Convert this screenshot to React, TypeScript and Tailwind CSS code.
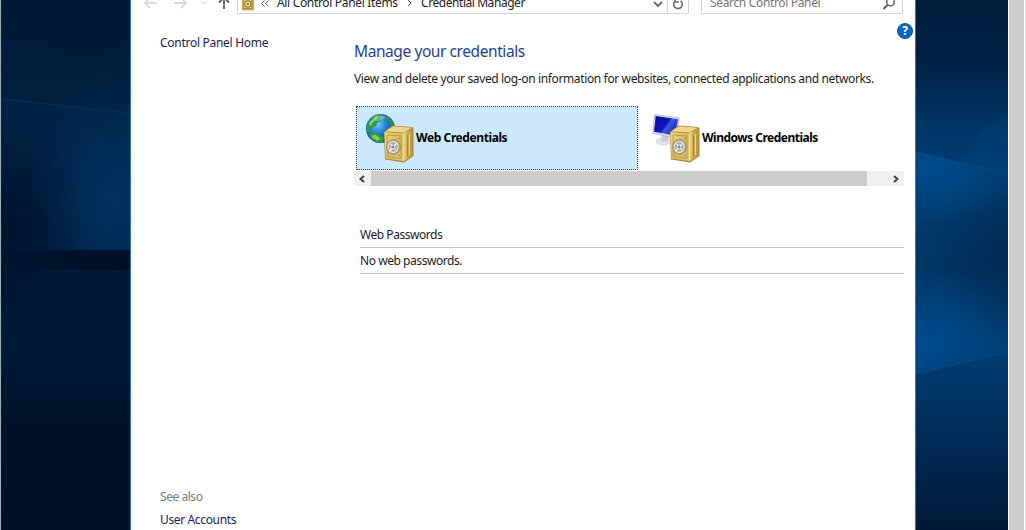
import React from "react";

function Safe() {
  return (
    <g>
      <path d="M19 19 L27 12.500 L47 14 Q48.500 14.500 48.500 16 V43 L39 49.500 L20 46.500 Z" fill="#a78736" />
      <path d="M20 18.500 L28 13.200 L47 14.800 L38.500 19.500 Z" fill="#ecd68a" />
      <path d="M38 20 L47.800 15.500 L47.500 43 L38 48.500 Z" fill="url(#safeSide)" />
      <path d="M42.500 22 V43" stroke="#9a7e35" strokeWidth=".8" />
      <path d="M44.500 21 V42" stroke="#f3e3a5" strokeWidth=".8" />
      <path d="M19.500 19.200 L38 20.200 L38 48 L20.500 45.500 Z" fill="url(#safeFront)" />
      <path d="M22 22 L36 23 L36 45.500 L22.500 43.500 Z" fill="none" stroke="#b1923f" strokeWidth=".8" />
      <ellipse cx="28.500" cy="34" rx="6.900" ry="7.500" fill="#b5a67a" stroke="#8a7b52" strokeWidth=".6" />
      <ellipse cx="28.200" cy="34" rx="5.600" ry="6.200" fill="#dedfdb" />
      <ellipse cx="28.200" cy="34" rx="3.700" ry="4.100" fill="#bcbcb6" stroke="#8c8c86" strokeWidth=".8" />
      <path d="M24.500 38 L32 30 M25.500 31 L31 37" stroke="#f7f7f2" strokeWidth="1.100" />
      <circle cx="28.200" cy="34" r="1.200" fill="#80817e" />
      <circle cx="34" cy="25.500" r=".7" fill="#8a6c25" />
      <circle cx="34" cy="42.500" r=".7" fill="#8a6c25" />
    </g>
  );
}

function Defs() {
  return (
    <svg width="0" height="0" className="absolute" aria-hidden="true">
      <defs>
        <linearGradient id="safeFront" x1="0" y1="0" x2="1" y2="1">
          <stop offset="0" stopColor="#f0dc8c" />
          <stop offset=".5" stopColor="#d8bb61" />
          <stop offset="1" stopColor="#e2c873" />
        </linearGradient>
        <linearGradient id="safeSide">
          <stop offset="0" stopColor="#f4e29c" />
          <stop offset=".4" stopColor="#cfae51" />
          <stop offset="1" stopColor="#b59338" />
        </linearGradient>
        <radialGradient id="ocean" cx=".4" cy=".35" r=".7">
          <stop offset="0" stopColor="#6cc6f4" />
          <stop offset=".5" stopColor="#1f74d2" />
          <stop offset="1" stopColor="#0b318c" />
        </radialGradient>
        <linearGradient id="screen" x1="0" y1="0" x2="1" y2=".6">
          <stop offset="0" stopColor="#0808a4" />
          <stop offset=".55" stopColor="#1018c0" />
          <stop offset=".65" stopColor="#3f58dc" />
          <stop offset="1" stopColor="#1526c8" />
        </linearGradient>
      </defs>
    </svg>
  );
}

function WebIcon() {
  return (
    <svg viewBox="0 0 50 50" className="size-[50px] shrink-0">
      <circle cx="15.500" cy="15.500" r="14.600" fill="url(#ocean)" />
      <path d="M2 13 C4 5 9 2 15 1.200 L18 3 L15 5 L16 8 L12 10 L11 13 L7 14 L5 19 L2.500 20 Q1 17 2 13Z" fill="#2e9a4a" />
      <path d="M4 11 Q7 5 13 3 L11 7 L8 9 L6 13Z" fill="#86d46c" />
      <path d="M3.500 21 L9 19 L14 22 L19 24 L18 29.500 Q9 31 3.500 21Z" fill="#2f9b3c" />
      <path d="M6 23 L10 21.500 L15 25 L13 28 Q9 27 6 23Z" fill="#7ccb55" />
      <path d="M21 3 Q27 6 29.500 12 L29 17 L26 14 L24 9 L20 7Z" fill="#2f8d58" />
      <path d="M9 3.800 Q15 1 21 4 Q17 8 11 8Z" fill="#fff" opacity=".3" />
      <Safe />
    </svg>
  );
}

function WindowsIcon() {
  return (
    <svg viewBox="0 0 50 50" className="size-[50px] shrink-0">
      <ellipse cx="12.500" cy="28.500" rx="7.500" ry="3.500" fill="#e3e7ea" stroke="#c8cdd3" strokeWidth=".6" />
      <path d="M11 22 L18 23 L17 29 L10 28Z" fill="#c5ccd3" />
      <path d="M3.500 1.500 L28.500 5 L25 25 L1.500 20.500 Z" fill="#d5dbea" stroke="#a3acc6" strokeWidth=".6" />
      <path d="M4.700 3 L27 6.200 L24 22.500 L3 18.800 Z" fill="url(#screen)" />
      <Safe />
    </svg>
  );
}

function Chevron({ d, className }: { d: string; className: string }) {
  return (
    <svg viewBox="0 0 10 10" className={className} fill="none" stroke="currentColor">
      <path d={d} />
    </svg>
  );
}

function Toolbar() {
  return (
    <header className="h-[14px] shrink-0 overflow-hidden">
      <div className="-mt-2 flex h-[22px] items-center pr-3 text-[12px] leading-[22px] text-[#222]">
        <svg viewBox="0 0 106 22" className="h-[22px] w-[106px] shrink-0 text-[#cfcfcf]" fill="none" stroke="currentColor">
          <path d="M26 11 H14 M19 6 L14 11 L19 16" strokeWidth="1.300" />
          <path d="M43 11 H55 M50 6 L55 11 L50 16" strokeWidth="1.300" />
          <path d="M70.500 9.500 L73 12 L75.500 9.500" strokeWidth="1" />
          <path d="M93 17 V5 M88 10.500 L93 5.500 L98 10.500" stroke="#5e5e5e" strokeWidth="1.800" />
        </svg>
        <div className="flex h-[22px] w-[452px] shrink-0 items-center border border-[#d4d4d4]">
          <svg viewBox="0 0 14 18" className="ml-[4px] h-[18px] w-[13px] shrink-0">
            <rect width="13" height="17" fill="#cda747" />
            <rect x="1.500" y="2" width="9" height="13" fill="#dfbf65" stroke="#a27b20" strokeWidth=".7" />
            <circle cx="6.300" cy="10" r="3.400" fill="#e8dfbe" stroke="#7d6225" />
            <circle cx="6.300" cy="10" r="1.200" fill="#79633a" />
          </svg>
          <svg viewBox="0 0 10 10" className="ml-[5px] mt-[2px] size-[10px] shrink-0" fill="none" stroke="#555">
            <path d="M4.500 1.500 L1.500 4.500 L4.500 7.500 M8.500 1.500 L5.500 4.500 L8.500 7.500" />
          </svg>
          <span className="ml-[7px] w-[122px] shrink-0 whitespace-nowrap tracking-[-0.33px]">All Control Panel Items</span>
          <Chevron d="M3 2 L6 5 L3 8" className="ml-[6px] mr-[6px] size-[10px] shrink-0 text-[#555]" />
          <span className="whitespace-nowrap tracking-[-0.44px]">Credential Manager</span>
          <Chevron d="M1 3 L5 7 L9 3" className="ml-auto mr-[4px] mt-[2px] size-[10px] shrink-0 stroke-[1.8] text-[#666]" />
          <div className="flex h-full w-[21px] shrink-0 items-center justify-center border-l border-[#d4d4d4]">
            <svg viewBox="0 0 12 12" className="mt-[1px] size-[12px]" fill="none" stroke="#6a6a6a" strokeWidth="1.600">
              <path d="M8.500 2.800 A4.300 4.300 0 1 1 3.500 2.800 M3 0 V4 H7" />
            </svg>
          </div>
        </div>
        <div className="ml-3 flex h-[22px] w-[202px] shrink-0 items-center border border-[#d4d4d4]">
          <span className="ml-[8px] whitespace-nowrap tracking-[-0.34px] text-[#767676]">Search Control Panel</span>
          <svg viewBox="0 0 14 14" className="ml-auto mr-[6px] mt-[2px] size-[14px] shrink-0" fill="none" stroke="#5f5f5f">
            <circle cx="8.500" cy="5" r="3.800" strokeWidth="1.400" />
            <path d="M5.700 7.800 L1.500 12" strokeWidth="2" />
          </svg>
        </div>
      </div>
    </header>
  );
}

function Sidebar() {
  return (
    <nav className="flex w-[223px] shrink-0 flex-col pl-[29px] text-[12px] leading-[16px] text-[#1d1b55]">
      <a className="mt-[21px] whitespace-nowrap tracking-[-0.28px]">Control Panel Home</a>
      <span className="mt-auto tracking-[-0.45px] text-[#7b7b7b]">See also</span>
      <a className="mb-[2px] mt-[7px] tracking-[-0.36px]">User Accounts</a>
    </nav>
  );
}

function Credentials() {
  return (
    <main className="flex w-[550px] shrink-0 flex-col text-[12px] leading-[16px] text-[#1c1c1c]">
      <h1 className="mt-[26px] h-[22px] whitespace-nowrap text-[15.5px] leading-[22px] tracking-[-0.42px] text-[#1f4393]">
        Manage your credentials
      </h1>
      <p className="mt-[9px] h-[16px] whitespace-nowrap tracking-[-0.365px]">
        View and delete your saved log-on information for websites, connected applications and networks.
      </p>
      <div className="ml-[2px] mt-[19px] flex h-[64px] text-[12px] font-bold text-black">
        <div className="flex w-[282px] shrink-0 items-center border border-dotted border-[#27445c] bg-[#cce8ff] pl-[8px]">
          <WebIcon />
          <span className="ml-[1px] whitespace-nowrap tracking-[-0.41px]">Web Credentials</span>
        </div>
        <div className="flex items-center pl-[13px]">
          <WindowsIcon />
          <span className="ml-[1px] whitespace-nowrap tracking-[-0.5px]">Windows Credentials</span>
        </div>
      </div>
      <div className="mt-px flex h-[15px] bg-[#f0f0f0] text-[#444]">
        <div className="flex w-[17px] items-center justify-center pr-px">
          <Chevron d="M7 2 L3.500 5 L7 8" className="size-[10px] stroke-2" />
        </div>
        <div className="w-[496px] bg-[#cdcdcd]" />
        <div className="flex w-[37px] items-center justify-end pr-[3px]">
          <Chevron d="M3 2 L6.500 5 L3 8" className="size-[10px] stroke-2" />
        </div>
      </div>
      <section className="ml-[6px] mt-[36px]">
        <h2 className="h-[26px] border-b border-[#c6c6c6] pt-[5px] tracking-[-0.46px]">Web Passwords</h2>
        <p className="h-[26px] border-b border-[#c6c6c6] pt-[5px] tracking-[-0.44px]">No web passwords.</p>
      </section>
    </main>
  );
}

function LeftWallpaper() {
  return (
    <svg viewBox="0 0 130 530" preserveAspectRatio="none" className="h-full w-[130px] shrink-0">
      <defs>
        <linearGradient id="lb" x1="0" y1="0" x2="0" y2="1">
          <stop offset="0" stopColor="#001936" />
          <stop offset=".2" stopColor="#00203f" />
          <stop offset=".45" stopColor="#001b39" />
          <stop offset=".65" stopColor="#001b38" />
          <stop offset=".8" stopColor="#00122b" />
          <stop offset="1" stopColor="#000f26" />
        </linearGradient>
        <radialGradient id="lg">
          <stop offset="0" stopColor="#003260" />
          <stop offset="1" stopColor="#003260" stopOpacity="0" />
        </radialGradient>
        <radialGradient id="ld">
          <stop offset="0" stopColor="#000e28" stopOpacity=".7" />
          <stop offset="1" stopColor="#000e28" stopOpacity="0" />
        </radialGradient>
        <linearGradient id="lbar">
          <stop offset="0" stopColor="#00122c" stopOpacity="0" />
          <stop offset=".5" stopColor="#001027" stopOpacity=".8" />
          <stop offset="1" stopColor="#000e24" />
        </linearGradient>
        <clipPath id="lc"><rect width="130" height="252" /></clipPath>
      </defs>
      <rect width="130" height="530" fill="url(#lb)" />
      <g clipPath="url(#lc)">
        <path d="M0 99 L130 113 V252 H0Z" fill="#002a53" opacity=".25" />
        <path d="M0 99 L130 113" stroke="#23568a" opacity=".3" />
        <ellipse cx="115" cy="200" rx="90" ry="130" fill="url(#lg)" />
      </g>
      <ellipse cx="10" cy="230" rx="75" ry="110" fill="url(#ld)" />
      <ellipse cx="85" cy="20" rx="50" ry="45" fill="url(#ld)" opacity=".4" />
      <rect y="250" width="130" height="20" fill="url(#lbar)" />
      <rect width="1" height="530" fill="#9eafbe" />
    </svg>
  );
}

function RightWallpaper() {
  return (
    <svg viewBox="0 0 92 530" preserveAspectRatio="none" className="h-full w-[92px] shrink-0">
      <defs>
        <linearGradient id="rb" x1="0" y1="0" x2="0" y2="1">
          <stop offset="0" stopColor="#001b3b" />
          <stop offset=".12" stopColor="#002246" />
          <stop offset=".24" stopColor="#003566" />
          <stop offset=".34" stopColor="#003f75" />
          <stop offset=".5" stopColor="#003564" />
          <stop offset=".65" stopColor="#003e74" />
          <stop offset=".76" stopColor="#003363" />
          <stop offset=".9" stopColor="#00234a" />
          <stop offset="1" stopColor="#001a38" />
        </linearGradient>
        <radialGradient id="rg">
          <stop offset="0" stopColor="#005298" stopOpacity=".7" />
          <stop offset="1" stopColor="#005298" stopOpacity="0" />
        </radialGradient>
        <radialGradient id="rd">
          <stop offset="0" stopColor="#00254c" stopOpacity=".65" />
          <stop offset="1" stopColor="#00254c" stopOpacity="0" />
        </radialGradient>
        <clipPath id="rc"><path d="M0 152 L92 174 V352 L0 374Z" /></clipPath>
      </defs>
      <rect width="92" height="530" fill="url(#rb)" />
      <ellipse cx="92" cy="250" rx="80" ry="90" fill="url(#rd)" />
      <g clipPath="url(#rc)">
        <ellipse cx="18" cy="165" rx="85" ry="60" fill="url(#rg)" />
        <ellipse cx="12" cy="345" rx="85" ry="80" fill="url(#rg)" />
      </g>
      <path d="M92 115 L70 125 L45 163 L92 174Z" fill="#00447e" opacity=".3" />
      <path d="M0 152 L92 174 M92 352 L0 374" stroke="#1a65a5" opacity=".3" />
    </svg>
  );
}

export default function App() {
  return (
    <div className="flex h-[530px] w-[1026px] overflow-hidden bg-white font-['Noto_Sans','Open_Sans',sans-serif]">
      <Defs />
      <LeftWallpaper />
      <div className="relative flex w-[786px] shrink-0 flex-col border-x border-[#2779b5] bg-white">
        <Toolbar />
        <div className="flex min-h-0 grow">
          <Sidebar />
          <Credentials />
        </div>
        <div className="absolute right-[2px] top-[23px] flex size-4 items-center justify-center rounded-full border border-[#0a4f9c] bg-[#0b66c3] text-[12px] font-bold leading-none text-white">
          ?
        </div>
      </div>
      <RightWallpaper />
      <div className="w-[18px] shrink-0 bg-white pl-px">
        <div className="h-full w-[17px] border-r border-[#dadada] bg-white">
          <div className="h-full w-[15px] bg-[#cdcdcd]" />
        </div>
      </div>
    </div>
  );
}
